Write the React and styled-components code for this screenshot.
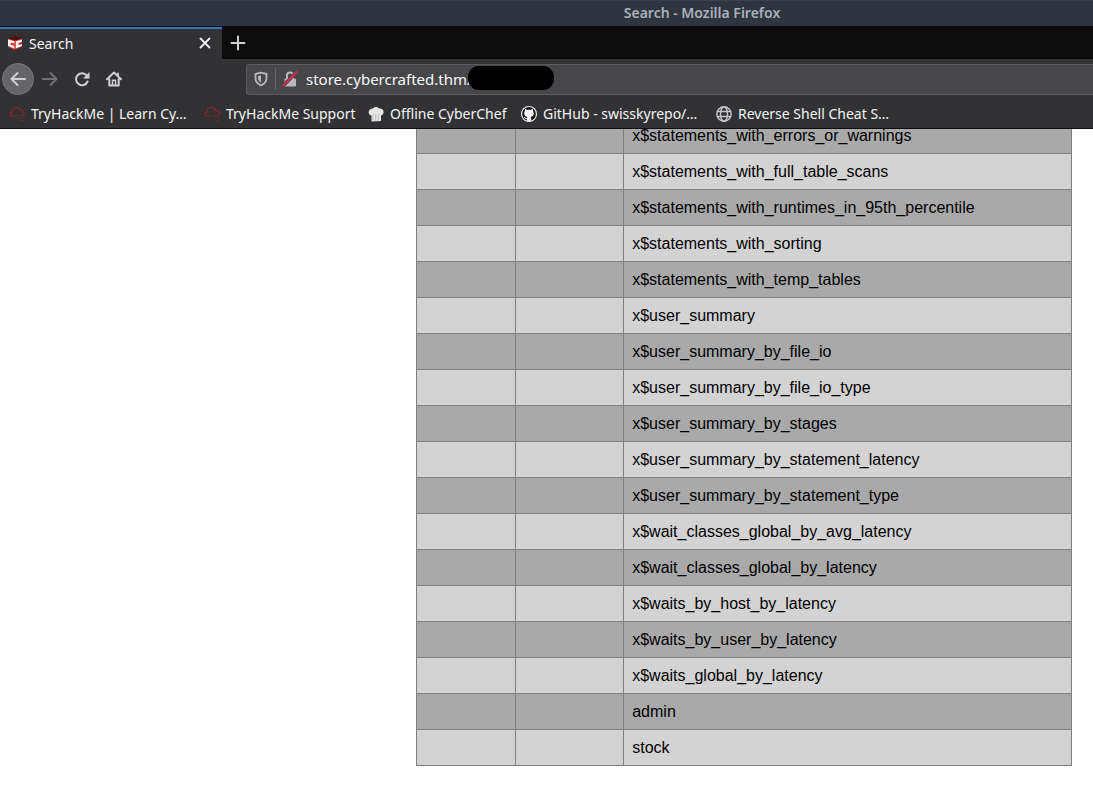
import React from "react";
import styled, { createGlobalStyle } from "styled-components";

const GlobalStyle = createGlobalStyle`
  * { box-sizing: border-box; }
  body { margin: 0; background: #fff; }
`;

const Window = styled.div`
  min-height: 100vh;
  display: flex;
  flex-direction: column;
  overflow: hidden;
  font-family: "Noto Sans", sans-serif;
  font-size: 14px;
  color: #f5f5f6;
`;

const TitleBar = styled.header`
  height: 26px;
  line-height: 24px;
  padding-left: 311px;
  text-align: center;
  white-space: nowrap;
  background: #2f343f;
  border-top: 1px solid #3b404a;
  color: #a9b0bd;
  font-size: 14px;
  font-weight: 600;
`;

const TabStrip = styled.div`
  display: flex;
  height: 33px;
  padding-top: 1px;
  background: #0c0c0d;
`;

const Tab = styled.div`
  display: flex;
  align-items: center;
  width: 222px;
  padding: 0 8px 2px 7px;
  border-top: 2px solid #3078bf;
  background: #323234;
`;

const TabTitle = styled.span`
  flex: 1;
  margin-left: 6px;
  font-size: 14px;
`;

const IconButton = styled.button`
  display: flex;
  align-items: center;
  justify-content: center;
  flex: none;
  width: ${(p) => p.$size}px;
  height: ${(p) => p.$size}px;
  padding: 0;
  border: ${(p) => (p.$round ? "1px solid #78787a" : "0")};
  border-radius: 50%;
  background: ${(p) => (p.$round ? "#656567" : "none")};
  color: ${(p) => (p.$dim ? "#727274" : "#d0d0d2")};
`;

const Toolbar = styled.div`
  display: flex;
  align-items: center;
  height: 40px;
  padding-left: 2px;
  background: #323234;
`;

const NavButtons = styled.div`
  display: flex;
  align-items: center;
  width: 244px;
`;

const AddressBar = styled.div`
  flex: 1;
  display: flex;
  align-items: center;
  height: 31px;
  padding-left: 6px;
  border: 1px solid #5c5c5e;
  border-right: 0;
  border-radius: 3px 0 0 3px;
  background: #474749;
  color: #b8b8ba;
`;

const Divider = styled.span`
  width: 1px;
  height: 22px;
  margin: 0 6px;
  background: #656567;
`;

const AddressField = styled.div`
  position: relative;
  flex: 1;
  display: flex;
  margin-left: 8px;
`;

const AddressInput = styled.input`
  width: 100%;
  padding: 0;
  border: 0;
  outline: 0;
  background: none;
  color: #f9f9fa;
  font: 15px/20px "Noto Sans", sans-serif;
`;

const Redaction = styled.span`
  position: absolute;
  top: -3px;
  left: 162px;
  width: 86px;
  height: 24px;
  border-radius: 11px;
  background: #000;
`;

const Bookmarks = styled.nav`
  display: flex;
  height: 30px;
  padding-left: 9px;
  border-bottom: 1px solid #0c0c0d;
  background: #323234;
`;

const Bookmark = styled.a`
  display: flex;
  align-items: center;
  gap: 6px;
  flex: none;
  width: ${(p) => p.$width}px;
  white-space: nowrap;
  color: inherit;
  text-decoration: none;
`;

const Page = styled.main`
  flex: 1;
  overflow: hidden;
  background: #fff;
`;

const Results = styled.table`
  width: 60%;
  margin: -12px 21px 30px auto;
  border-collapse: collapse;
  table-layout: fixed;
  color: #000;
  font: 16px/19px "Liberation Sans", Arial, sans-serif;
`;

const Column = styled.col`
  width: ${(p) => p.$width};
`;

const Row = styled.tr`
  background: #d3d3d3;
  &:nth-child(odd) { background: #a9a9a9; }
`;

const Cell = styled.td`
  height: 36px;
  padding: 8px;
  border: 1px solid #808080;
`;

const Svg = ({ size = 16, children, ...rest }) => (
  <svg width={size} height={size} viewBox="0 0 16 16" fill="none" stroke="currentColor"
    strokeWidth="2" strokeLinecap="round" strokeLinejoin="round" aria-hidden="true" {...rest}>
    {children}
  </svg>
);

const CubeIcon = () => (
  <Svg stroke="none">
    <path d="M1 3.500 8 1.500l7 2L8 6z" fill="#5d0808" />
    <path d="M1 3.500 8 5.500v9.500l-6-2.500z" fill="#d8352b" />
    <path d="M15 3.500 8 5.500v9.500l6-2.500z" fill="#c02019" />
    <path d="M7.300 6.200 1 4.500V11l6.300 2.500V11L3.800 9.800V7.500l3.500 1z" fill="#fff" />
    <path d="M8.700 6.200 15 4.500V7l-3.500 1v2l3.500-.8V11l-6.300 2.500z" fill="#fff" />
  </Svg>
);

const CloseIcon = () => <Svg size={12} strokeWidth="2.400" stroke="#f0f0f1"><path d="M2 2l12 12M14 2 2 14" /></Svg>;
const PlusIcon = () => <Svg><path d="M8 1.500v13M1.500 8h13" /></Svg>;
const BackIcon = () => <Svg><path d="M15 8H1.500M7.500 2 1.500 8l6 6" /></Svg>;
const ForwardIcon = () => <Svg><path d="M1 8h13.500M8.500 2l6 6-6 6" /></Svg>;
const ReloadIcon = () => (
  <Svg>
    <path d="M13 4.800A6 6 0 1 0 13.600 10.500" />
    <path d="M15.500 1v6.500H9z" fill="currentColor" stroke="none" />
  </Svg>
);
const HomeIcon = () => (
  <Svg>
    <path d="M1 8.300 8 1.500l7 6.800M3.300 8v6.500h9.400V8" />
    <path d="M6.500 14V9.200h3V14" strokeWidth="1.500" />
    <path d="M12 2.500v2" />
  </Svg>
);
const ShieldIcon = () => (
  <Svg strokeWidth="1.800">
    <path d="M8 1.700 13.500 3v4.500c0 3.500-2.500 5.500-5.500 7-3-1.500-5.500-3.500-5.500-7V3z" />
    <path d="M8 4.200v7.600C6 10.500 5 9 5 7V5z" fill="currentColor" stroke="none" />
  </Svg>
);
const LockIcon = () => (
  <Svg>
    <path d="M5 8V4.500a3 3 0 0 1 6 0V8" />
    <rect x="2.500" y="7.500" width="11.500" height="8" rx="1" fill="currentColor" stroke="none" />
    <path d="M1.500 14.500 14.500 1" stroke="#474749" strokeWidth="3.500" />
    <path d="M1.500 14.500 14.500 1" stroke="#d7264f" />
  </Svg>
);
const CloudIcon = () => (
  <Svg stroke="#962226" strokeWidth="1.200">
    <path d="M6 10H3.500C.5 10 .300 6.500 3 6.200 3 3 5 1.500 7.500 1.500c2.300 0 3.500 1.300 4 3 3 0 4 2 3.500 4" />
    <path d="M7.500 10h1.500M11 9.500h3.500M9.500 12h2M13.500 12h1.500M12 14.500h2" strokeWidth="1" opacity=".7" />
  </Svg>
);
const ChefIcon = () => (
  <Svg stroke="none" fill="#e6e6e6">
    <path d="M3.500 9.500C.5 9 0 5.500 1.500 4 2.500 2.500 4 2.500 5 2.500 6.500.500 9.500.500 11 2.500c2 0 4 .5 4.500 2.500.5 2.500-1 4.200-2.500 4.500V15l-9.500.5z" />
    <path d="M5 8v6M7.700 8.500V14M10.500 8v6" stroke="#b5b5b7" strokeWidth=".8" />
  </Svg>
);
const GitHubIcon = () => (
  <Svg stroke="none">
    <circle cx="8" cy="8" r="8" fill="#f5f5f5" />
    <circle cx="8" cy="8" r="6.900" fill="#19191b" />
    <path d="M5.800 15v-2.200c-2 .4-2.200-1-3-1.400 1.200-.3 1.500 1 3 .6.100-.5.300-.9.600-1.100C4.500 10.600 3.200 9.600 3.200 7c0-.8.300-1.500.8-2-.2-.600-.100-1.400.1-2 .8 0 1.500.4 2.100.9a7 7 0 0 1 3.600 0c.6-.5 1.300-.9 2.100-.9.200.6.300 1.400.1 2 .5.500.8 1.200.8 2 0 2.600-1.300 3.600-3.200 3.900.4.400.6.900.6 1.600V15z" fill="#f5f5f5" />
  </Svg>
);
const GlobeIcon = () => (
  <Svg stroke="#c8c8ca" strokeWidth="1.400">
    <circle cx="8" cy="8" r="7.200" />
    <ellipse cx="8" cy="8" rx="3.500" ry="7.200" />
    <path d="M1.500 5.500h13M1.500 10.500h13" />
  </Svg>
);

const bookmarks = [
  { icon: CloudIcon, label: "TryHackMe | Learn Cy…", width: 195 },
  { icon: CloudIcon, label: "TryHackMe Support", width: 164 },
  { icon: ChefIcon, label: "Offline CyberChef", width: 153 },
  { icon: GitHubIcon, label: "GitHub - swisskyrepo/…", width: 195 },
  { icon: GlobeIcon, label: "Reverse Shell Cheat S…", width: 195 },
];

const tableNames = [
  "x$statements_with_errors_or_warnings",
  "x$statements_with_full_table_scans",
  "x$statements_with_runtimes_in_95th_percentile",
  "x$statements_with_sorting",
  "x$statements_with_temp_tables",
  "x$user_summary",
  "x$user_summary_by_file_io",
  "x$user_summary_by_file_io_type",
  "x$user_summary_by_stages",
  "x$user_summary_by_statement_latency",
  "x$user_summary_by_statement_type",
  "x$wait_classes_global_by_avg_latency",
  "x$wait_classes_global_by_latency",
  "x$waits_by_host_by_latency",
  "x$waits_by_user_by_latency",
  "x$waits_global_by_latency",
  "admin",
  "stock",
];

export default function App() {
  return (
    <Window>
      <GlobalStyle />
      <TitleBar>Search - Mozilla Firefox</TitleBar>
      <TabStrip>
        <Tab>
          <CubeIcon />
          <TabTitle>Search</TabTitle>
          <IconButton $size={18} aria-label="Close tab"><CloseIcon /></IconButton>
        </Tab>
        <IconButton $size={32} aria-label="New tab"><PlusIcon /></IconButton>
      </TabStrip>
      <Toolbar>
        <NavButtons>
          <IconButton $size={32} $round aria-label="Back"><BackIcon /></IconButton>
          <IconButton $size={32} $dim aria-label="Forward"><ForwardIcon /></IconButton>
          <IconButton $size={32} aria-label="Reload"><ReloadIcon /></IconButton>
          <IconButton $size={32} aria-label="Home"><HomeIcon /></IconButton>
        </NavButtons>
        <AddressBar>
          <ShieldIcon />
          <Divider />
          <LockIcon />
          <AddressField>
            <AddressInput aria-label="Address" defaultValue="store.cybercrafted.thm/" />
            <Redaction />
          </AddressField>
        </AddressBar>
      </Toolbar>
      <Bookmarks>
        {bookmarks.map(({ icon: Icon, label, width }) => (
          <Bookmark key={label} href="#" $width={width}>
            <Icon />
            {label}
          </Bookmark>
        ))}
      </Bookmarks>
      <Page>
        <Results>
          <colgroup>
            <Column $width="99px" />
            <Column $width="108px" />
            <Column $width="auto" />
          </colgroup>
          <tbody>
            {tableNames.map((name) => (
              <Row key={name}>
                <Cell />
                <Cell />
                <Cell>{name}</Cell>
              </Row>
            ))}
          </tbody>
        </Results>
      </Page>
    </Window>
  );
}
